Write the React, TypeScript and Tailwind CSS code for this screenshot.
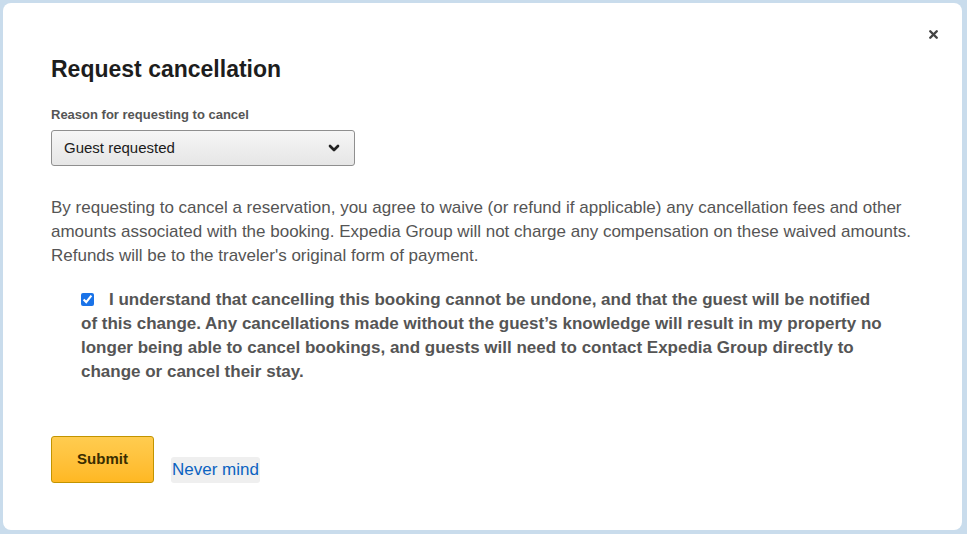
import { ChevronDown, X } from "lucide-react";

export default function App() {
  return (
    <div className="w-[967px] h-[534px] bg-[#c9dcec] p-[3px] pr-[5px] pb-[4px] font-['Liberation_Sans',Arial,sans-serif]">
      <div className="relative h-full w-full rounded-lg bg-white pl-12 pr-12 pt-[52px]">
        <button className="absolute right-[22px] top-[25px] text-[#444]">
          <X className="h-[13px] w-[13px]" strokeWidth={4.5} />
        </button>
        <h2 className="text-[23px] font-bold leading-7 text-[#1d1d1d]">Request cancellation</h2>
        <label className="mt-[24px] block text-[13px] font-bold leading-4 text-[#555]">
          Reason for requesting to cancel
        </label>
        <div className="mt-[7px] flex h-[36px] w-[304px] items-center justify-between rounded-[3px] border border-[#8f8f8f] bg-gradient-to-b from-[#f6f6f6] to-[#e6e6e6] pl-3 pr-3">
          <span className="text-[15px] text-[#1b1b1b]">Guest requested</span>
          <ChevronDown className="h-[16px] w-[16px] text-[#222]" strokeWidth={4} />
        </div>
        <p className="mt-[30px] text-[17px] leading-6 text-[#555]">
          By requesting to cancel a reservation, you agree to waive (or refund if applicable) any cancellation fees and other
          amounts associated with the booking. Expedia Group will not charge any compensation on these waived amounts.
          Refunds will be to the traveler's original form of payment.
        </p>
        <div className="mt-[20px] w-[836px] pl-[30px] text-[17px] font-bold leading-6 text-[#555]">
          <input type="checkbox" defaultChecked className="mr-[15px] h-[13px] w-[13px] align-[-1px] accent-[#1a73e8]" />
          I understand that cancelling this booking cannot be undone, and that the guest will be notified of this change. Any
          cancellations made without the guest’s knowledge will result in my property no longer being able to cancel
          bookings, and guests will need to contact Expedia Group directly to change or cancel their stay.
        </div>
        <div className="mt-[52px] flex items-end gap-[17px]">
          <button className="h-[47px] w-[103px] rounded-[3px] border border-[#c29400] bg-gradient-to-b from-[#ffcc4f] to-[#ffb822] text-[15px] font-bold text-[#3a2d00]">
            Submit
          </button>
          <button className="h-[26px] rounded-[3px] bg-[#efefef] px-[1px] text-[17px] leading-[26px] text-[#0b63c1]">
            Never mind
          </button>
        </div>
      </div>
    </div>
  );
}
